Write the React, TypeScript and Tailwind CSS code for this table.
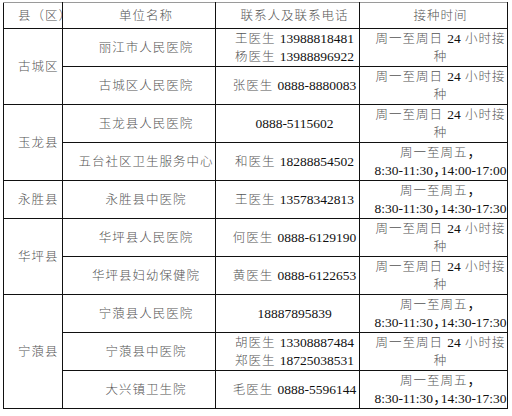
type Row = {
  county?: string
  span?: number
  unit: string
  contact: string[]
  time: string[]
}

const rows: Row[] = [
  { county: '古城区', span: 2, unit: '丽江市人民医院', contact: ['王医生 13988818481', '杨医生 13988896922'], time: ['周一至周日 24 小时接', '种'] },
  { unit: '古城区人民医院', contact: ['张医生 0888-8880083'], time: ['周一至周日 24 小时接', '种'] },
  { county: '玉龙县', span: 2, unit: '玉龙县人民医院', contact: ['0888-5115602'], time: ['周一至周日 24 小时接', '种'] },
  { unit: '五台社区卫生服务中心', contact: ['和医生 18288854502'], time: ['周一至周五，', '8:30-11:30，14:00-17:00'] },
  { county: '永胜县', span: 1, unit: '永胜县中医院', contact: ['王医生 13578342813'], time: ['周一至周五，', '8:30-11:30，14:30-17:30'] },
  { county: '华坪县', span: 2, unit: '华坪县人民医院', contact: ['何医生 0888-6129190'], time: ['周一至周日 24 小时接', '种'] },
  { unit: '华坪县妇幼保健院', contact: ['黄医生 0888-6122653'], time: ['周一至周日 24 小时接', '种'] },
  { county: '宁蒗县', span: 3, unit: '宁蒗县人民医院', contact: ['18887895839'], time: ['周一至周五，', '8:30-11:30，14:30-17:30'] },
  { unit: '宁蒗县中医院', contact: ['胡医生 13308887484', '郑医生 18725038531'], time: ['周一至周日 24 小时接', '种'] },
  { unit: '大兴镇卫生院', contact: ['毛医生 0888-5596144'], time: ['周一至周五，', '8:30-11:30，14:30-17:30'] },
]

// ascii runs (digits, times) print darker; the CJK glyphs are thin and airy
function Mixed({ text }: { text: string }) {
  const parts = text.split(/([0-9:\-，]+)/)
  return (
    <>
      {parts.map((p, i) => {
        if (!/^[0-9:\-，]+$/.test(p)) return <Cjk key={i} text={p} />
        // the comma between two time ranges is set narrow, as in the source doc
        const bits = p.split(/(?<=\d)，(?=\d)/)
        return (
          <span key={i} className="text-[#111]">
            {bits.map((b, j) => (
              <span key={j}>
                {j > 0 && <span className="tracking-[-6px]">，</span>}
                {b}
              </span>
            ))}
          </span>
        )
      })}
    </>
  )
}

function Cjk({ text }: { text: string }) {
  return <span className="text-[12.5px] tracking-[1px] font-light text-[#555]">{text}</span>
}

const cell = 'border border-[#111] pl-[14px] text-center align-middle whitespace-nowrap overflow-hidden'

export default function App() {
  return (
    <div className="w-[512px] h-[416px] bg-white pl-[3px] pt-[2px] overflow-hidden">
      <table
        className="table-fixed border-collapse w-[504px] text-[13.5px] leading-[18px]"
        style={{ fontFamily: '"Liberation Serif", "Noto Sans CJK SC", serif' }}
      >
        <colgroup>
          <col className="w-[59px]" />
          <col className="w-[153px]" />
          <col className="w-[144px]" />
          <col className="w-[148px]" />
        </colgroup>
        <thead>
          <tr className="h-[26px]">
            <th className={`${cell} !text-left font-normal border-t-[#9a9a9a]`}>
              <Cjk text="县（区）" />
            </th>
            <th className={`${cell} font-normal border-t-[#9a9a9a]`}>
              <Cjk text="单位名称" />
            </th>
            <th className={`${cell} font-normal border-t-[#9a9a9a]`}>
              <Cjk text="联系人及联系电话" />
            </th>
            <th className={`${cell} font-normal border-t-[#9a9a9a]`}>
              <Cjk text="接种时间" />
            </th>
          </tr>
        </thead>
        <tbody>
          {rows.map((r) => (
            <tr key={r.unit} className="h-[38px]">
              {r.county && (
                <td rowSpan={r.span} className={`${cell} !text-left`}>
                  <Cjk text={r.county} />
                </td>
              )}
              <td className={cell}>
                <Cjk text={r.unit} />
              </td>
              <td className={cell}>
                {r.contact.map((c) => (
                  <div key={c}>
                    <Mixed text={c} />
                  </div>
                ))}
              </td>
              <td className={`${cell} pr-0`}>
                {r.time.map((t) => (
                  <div key={t}>
                    <Mixed text={t} />
                  </div>
                ))}
              </td>
            </tr>
          ))}
        </tbody>
      </table>
    </div>
  )
}
